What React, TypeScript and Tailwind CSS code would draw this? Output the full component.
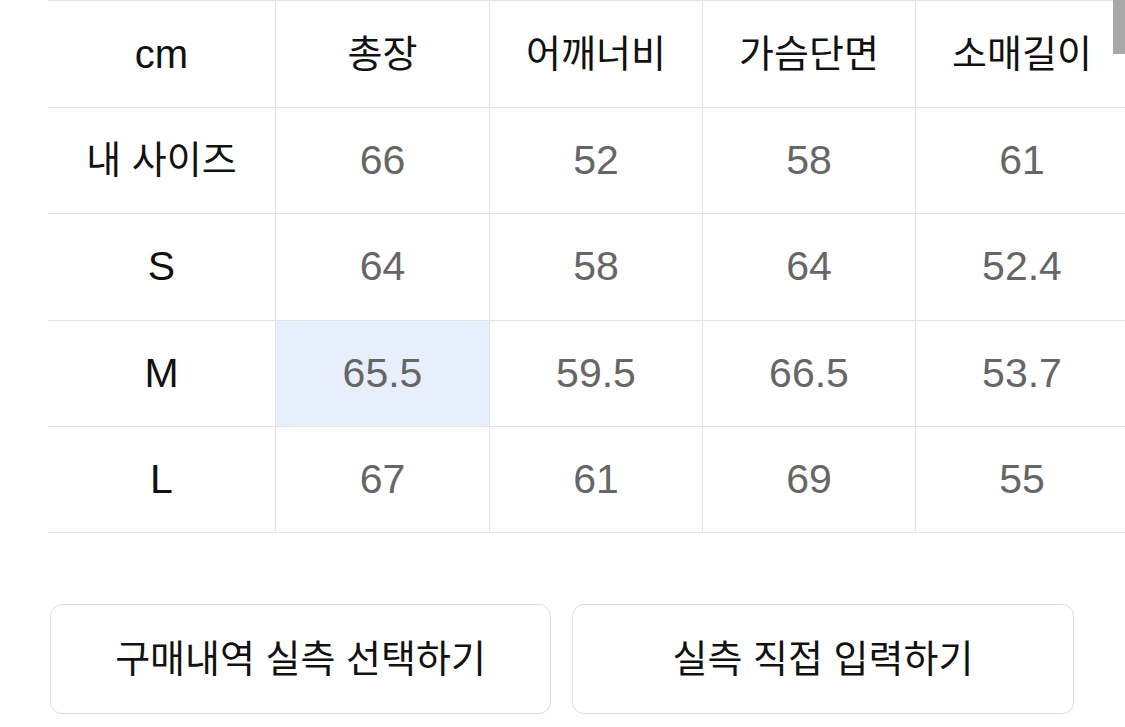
import React from "react";

const font = { fontFamily: '"Liberation Sans", "Noto Sans CJK KR", sans-serif' };

const header = ["cm", "총장", "어깨너비", "가슴단면", "소매길이"];
const rows: [string, string[], string][] = [
  ["내 사이즈", ["66", "52", "58", "61"], "h-[106px]"],
  ["S", ["64", "58", "64", "52.4"], "h-[107px]"],
  ["M", ["65.5", "59.5", "66.5", "53.7"], "h-[106px]"],
  ["L", ["67", "61", "69", "55"], "h-[106px]"],
];

export default function App() {
  return (
    <div
      className="relative w-[1125px] h-[727px] overflow-hidden bg-white"
      style={font}
    >
      <div className="ml-[48px] w-[1080px] border-t border-[#e4e4e4]">
        <div className="grid grid-cols-[228px_214px_213px_213px_212px]">
          {header.map((h, i) => (
            <div
              key={h}
              className={`h-[107px] flex items-center justify-center border-b border-[#e2e2e2] ${i === 0 ? "text-[40px]" : "text-[38px]"} text-[#111] ${i < 4 ? "border-r" : ""}`}
            >
              {h}
            </div>
          ))}
          {rows.map(([label, vals, h]) => (
            <React.Fragment key={label}>
              <div
                className={`${h} flex items-center justify-center border-b border-r border-[#e2e2e2] ${label.length > 1 ? "text-[38px]" : "text-[41px]"} text-[#111]`}
              >
                {label}
              </div>
              {vals.map((v, j) => (
                <div
                  key={j}
                  className={`${h} flex items-center justify-center border-b border-[#e2e2e2] text-[41px] text-[#666] ${j < 3 ? "border-r" : ""} ${label === "M" && j === 0 ? "bg-[#e8effc]" : ""}`}
                >
                  {v}
                </div>
              ))}
            </React.Fragment>
          ))}
        </div>
      </div>
      <div className="flex gap-[21px] ml-[50px] mt-[71px]">
        <button className="w-[501px] h-[110px] rounded-[12px] border border-[#dcdcdc] bg-white text-[38px] text-[#111] flex items-center justify-center">
          구매내역 실측 선택하기
        </button>
        <button className="w-[502px] h-[110px] rounded-[12px] border border-[#dcdcdc] bg-white text-[38px] text-[#111] flex items-center justify-center">
          실측 직접 입력하기
        </button>
      </div>
      <div className="absolute right-0 top-0 w-[12px] h-[54px] bg-[#a8a8a8]" />
    </div>
  );
}
